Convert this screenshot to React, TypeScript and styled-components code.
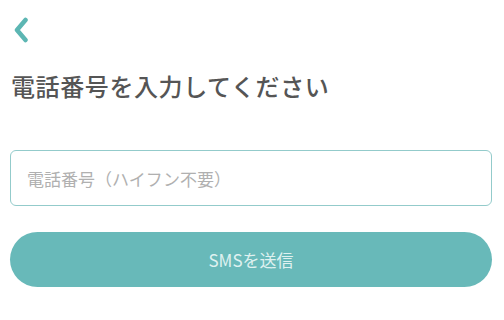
import styled, { createGlobalStyle } from 'styled-components'

const colors = {
  teal: '#5cb6b3',
  tealButton: '#68b9b9',
  tealBorder: '#93cbcb',
  title: '#555555',
  placeholder: '#b0b0b0',
  buttonText: '#dff1f0',
}

const GlobalStyle = createGlobalStyle`
  html, body {
    margin: 0;
    padding: 0;
    background: #ffffff;
  }
  body {
    font-family: "Noto Sans CJK JP", "Noto Sans", sans-serif;
  }
`

const Page = styled.main`
  width: 504px;
  height: 320px;
  box-sizing: border-box;
  padding: 17px 12px 0 10px;
  display: flex;
  flex-direction: column;
  overflow: hidden;
`

const BackButton = styled.button`
  width: 24px;
  height: 26px;
  margin-left: 3px;
  padding: 0;
  border: none;
  background: none;
  display: flex;
  align-items: center;
  cursor: pointer;
`

const Title = styled.h1`
  margin: 26px 0 0 1px;
  font-size: 24px;
  line-height: 34px;
  font-weight: 500;
  color: ${colors.title};
  letter-spacing: 0.6px;
`

const PhoneInput = styled.input`
  margin-top: 47px;
  height: 56px;
  box-sizing: border-box;
  width: 100%;
  border: 1.5px solid ${colors.tealBorder};
  border-radius: 6px;
  padding: 0 16px;
  font-family: inherit;
  font-size: 17px;
  color: ${colors.title};
  outline: none;

  &::placeholder {
    color: ${colors.placeholder};
  }
`

const SendButton = styled.button`
  margin-top: 26px;
  height: 55px;
  width: 100%;
  border: none;
  border-radius: 28px;
  background: ${colors.tealButton};
  color: ${colors.buttonText};
  font-family: inherit;
  font-size: 17px;
  cursor: pointer;
`

const ChevronLeft = () => (
  <svg width='16' height='26' viewBox='0 0 16 26'>
    <path
      d='M12.5 3 L4 13 L12.5 23'
      fill='none'
      stroke={colors.teal}
      strokeWidth='4.5'
      strokeLinecap='round'
      strokeLinejoin='round'
    />
  </svg>
)

const App = () => {
  return (
    <>
      <GlobalStyle />
      <Page>
        <BackButton aria-label='戻る'>
          <ChevronLeft />
        </BackButton>
        <Title>電話番号を入力してください</Title>
        <PhoneInput type='tel' placeholder='電話番号（ハイフン不要）' />
        <SendButton>SMSを送信</SendButton>
      </Page>
    </>
  )
}

export default App
